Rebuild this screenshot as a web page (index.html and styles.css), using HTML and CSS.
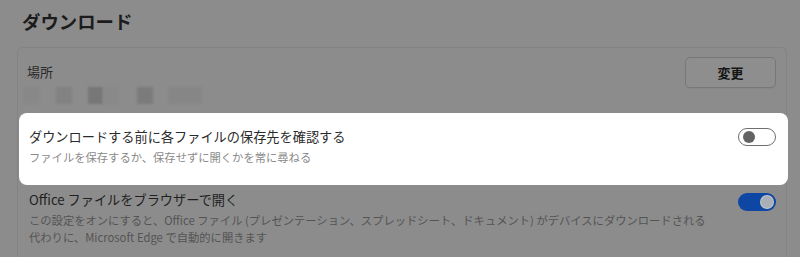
FILE: index.html
```html
<!DOCTYPE html>
<html lang="ja">
<head>
<meta charset="utf-8">
<link rel="stylesheet" href="styles.css">
</head>
<body>
<div class="page">
  <h1 class="title">ダウンロード</h1>
  <div class="card">
    <div class="loc-row">
      <div class="loc-info">
        <div class="loc-label">場所</div>
        <div class="blur-path">
          <span class="blk b1"></span>
          <span class="blk b2"></span>
          <span class="blk b3"></span>
          <span class="blk b3b"></span>
          <span class="blk b4"></span>
          <span class="blk b5"></span>
        </div>
      </div>
      <button class="btn">変更</button>
    </div>
    <div class="setting highlight">
      <div class="texts">
        <div class="s-title">ダウンロードする前に各ファイルの保存先を確認する</div>
        <div class="s-desc">ファイルを保存するか、保存せずに開くかを常に尋ねる</div>
      </div>
      <div class="toggle off"><span class="thumb"></span></div>
    </div>
    <div class="setting dim">
      <div class="texts">
        <div class="s-title">Office ファイルをブラウザーで開く</div>
        <div class="s-desc">この設定をオンにすると、Office ファイル (プレゼンテーション、スプレッドシート、ドキュメント) がデバイスにダウンロードされる<br>代わりに、Microsoft Edge で自動的に開きます</div>
      </div>
      <div class="toggle on"><span class="thumb"></span></div>
    </div>
  </div>
</div>
</body>
</html>
```
FILE: styles.css
```css
html, body {
  margin: 0;
  padding: 0;
  background: #8c8c8c;
  font-family: "Noto Sans CJK JP", "Noto Sans", sans-serif;
  overflow: hidden;
}

.page {
  padding: 0 13px 0 17px;
  height: 257px;
  box-sizing: border-box;
  overflow: hidden;
}

.title {
  margin: 0;
  padding-left: 5px;
  height: 47px;
  line-height: 42px;
  font-size: 18.4px;
  font-weight: 700;
  color: #1c1c1c;
}

.card {
  border: 1px solid #838383;
  border-bottom: none;
  border-radius: 6px 6px 0 0;
  height: 209px;
}

.loc-row {
  display: flex;
  justify-content: space-between;
  align-items: flex-start;
  padding: 9px 10px 0 9px;
}

.loc-info {
  padding-top: 6px;
}

.loc-label {
  font-size: 13px;
  line-height: 18px;
  color: #2a2a2a;
}

.blur-path {
  display: flex;
  margin-top: 6px;
  height: 17px;
  margin-left: -4px;
}

.blk {
  display: block;
  height: 17px;
  filter: blur(1px);
}
.b1 { width: 17px; background: #888888; }
.b2 { width: 16px; background: #828282; margin-left: 16px; }
.b3 { width: 15px; background: #777777; margin-left: 16px; }
.b3b { width: 16px; background: #898989; }
.b4 { width: 16px; background: #7b7b7b; margin-left: 18px; }
.b5 { width: 34px; background: #868686; margin-left: 15px; }

.btn {
  width: 91px;
  height: 31px;
  box-sizing: border-box;
  border: 1px solid #777777;
  border-radius: 5px;
  background: #8e8e8e;
  box-shadow: 0 2px 0 -1px #878787;
  font-family: inherit;
  font-size: 13px;
  font-weight: 700;
  color: #151515;
  padding: 0;
}

.setting {
  display: flex;
  justify-content: space-between;
  align-items: flex-start;
}

.highlight {
  margin: 9px -2px 0 1px;
  height: 72px;
  box-sizing: border-box;
  padding: 14px 12px 0 10px;
  background: #ffffff;
  border-radius: 8px;
}

.dim {
  padding: 5px 10px 0 11px;
}

.s-title {
  font-size: 13.2px;
  line-height: 20px;
}

.s-desc {
  font-size: 11.3px;
  line-height: 20px;
}

.highlight .s-title { color: #2b2b2b; }
.highlight .s-desc { color: #8a8a8a; }

.dim .s-title { color: #1f1f1f; }
.dim .s-desc {
  color: #545454;
  line-height: 17px;
  margin-top: 1.5px;
}

.toggle {
  position: relative;
  width: 38px;
  height: 18px;
  box-sizing: border-box;
  border-radius: 9px;
  flex-shrink: 0;
}

.toggle.off {
  margin-top: 1px;
  border: 1px solid #6f6f6f;
  background: #ffffff;
}

.toggle.off .thumb {
  position: absolute;
  left: 4px;
  top: 2px;
  width: 12px;
  height: 12px;
  border-radius: 50%;
  background: #636363;
}

.toggle.on {
  margin-top: 3px;
  background: #0e46a3;
}

.toggle.on .thumb {
  position: absolute;
  right: 3px;
  top: 3px;
  width: 12px;
  height: 12px;
  border-radius: 50%;
  background: #a9afb6;
  box-shadow: 0 0 0 1px #c4c9ce;
}
```
